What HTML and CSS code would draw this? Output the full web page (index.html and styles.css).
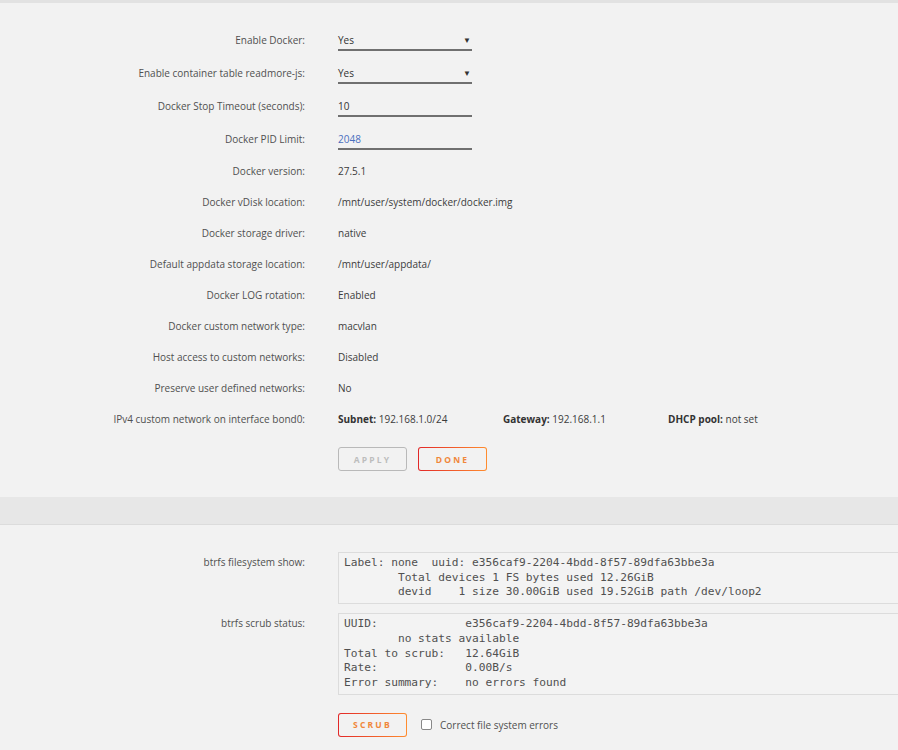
FILE: index.html
```html
<!DOCTYPE html>
<html lang="en">
<head>
    <meta charset="UTF-8">
    <title>Docker Settings</title>
    <link rel="stylesheet" href="styles.css">
</head>
<body>
    <div class="topbar"></div>

    <form class="settings">
        <div class="row input-row">
            <label>Enable Docker:</label>
            <div class="select"><span>Yes</span><span class="caret">&#9660;</span></div>
        </div>
        <div class="row input-row">
            <label>Enable container table readmore-js:</label>
            <div class="select"><span>Yes</span><span class="caret">&#9660;</span></div>
        </div>
        <div class="row input-row">
            <label>Docker Stop Timeout (seconds):</label>
            <div class="text-input">10</div>
        </div>
        <div class="row input-row">
            <label>Docker PID Limit:</label>
            <div class="text-input placeholder">2048</div>
        </div>
        <div class="row">
            <label>Docker version:</label>
            <span>27.5.1</span>
        </div>
        <div class="row">
            <label>Docker vDisk location:</label>
            <span>/mnt/user/system/docker/docker.img</span>
        </div>
        <div class="row">
            <label>Docker storage driver:</label>
            <span>native</span>
        </div>
        <div class="row">
            <label>Default appdata storage location:</label>
            <span>/mnt/user/appdata/</span>
        </div>
        <div class="row">
            <label>Docker LOG rotation:</label>
            <span>Enabled</span>
        </div>
        <div class="row">
            <label>Docker custom network type:</label>
            <span>macvlan</span>
        </div>
        <div class="row">
            <label>Host access to custom networks:</label>
            <span>Disabled</span>
        </div>
        <div class="row">
            <label>Preserve user defined networks:</label>
            <span>No</span>
        </div>
        <div class="row">
            <label>IPv4 custom network on interface bond0:</label>
            <div class="network">
                <span class="net-item"><b>Subnet:</b> 192.168.1.0/24</span>
                <span class="net-item"><b>Gateway:</b> 192.168.1.1</span>
                <span class="net-item"><b>DHCP pool:</b> not set</span>
            </div>
        </div>
        <div class="row button-row">
            <span></span>
            <div class="buttons">
                <button type="button" class="btn" disabled>Apply</button>
                <button type="button" class="btn btn-accent">Done</button>
            </div>
        </div>
    </form>

    <div class="band"></div>

    <div class="settings btrfs">
        <div class="row pre-row">
            <label>btrfs filesystem show:</label>
            <pre class="output">Label: none  uuid: e356caf9-2204-4bdd-8f57-89dfa63bbe3a
	Total devices 1 FS bytes used 12.26GiB
	devid    1 size 30.00GiB used 19.52GiB path /dev/loop2</pre>
        </div>
        <div class="row pre-row">
            <label>btrfs scrub status:</label>
            <pre class="output">UUID:             e356caf9-2204-4bdd-8f57-89dfa63bbe3a
	no stats available
Total to scrub:   12.64GiB
Rate:             0.00B/s
Error summary:    no errors found</pre>
        </div>
        <div class="row scrub-row">
            <span></span>
            <div class="scrub">
                <button type="button" class="btn btn-accent">Scrub</button>
                <label class="check"><span class="box"></span>Correct file system errors</label>
            </div>
        </div>
    </div>
</body>
</html>
```

FILE: styles.css
```css
html {
    overflow-x: hidden;
}
body {
    margin: 0;
    background-color: #f2f2f2;
    font-family: "Open Sans", Arial, sans-serif;
    font-size: 10px;
    color: #3c3c3c;
}
.topbar {
    height: 3px;
    background-color: #e2e2e2;
}
.settings {
    padding-top: 20px;
}
.row {
    display: grid;
    grid-template-columns: 305px 1fr;
    column-gap: 33px;
    align-items: center;
    height: 31px;
}
.row label {
    text-align: right;
    color: #505050;
}
.input-row {
    height: 33px;
}
.select, .text-input {
    width: 134px;
    height: 23px;
    box-sizing: border-box;
    border-bottom: 2px solid #707070;
    display: flex;
    justify-content: space-between;
    align-items: center;
    padding-top: 2px;
    color: #333;
}
.caret {
    font-size: 8px;
    margin-right: 1px;
}
.placeholder {
    color: #4a6fbf;
}
.network {
    display: flex;
}
.net-item {
    width: 165px;
}
.net-item b {
    color: #333;
}
.button-row {
    height: 37px;
    align-items: end;
}
.buttons, .scrub {
    display: flex;
    align-items: center;
    gap: 11px;
}
.btn {
    width: 69px;
    height: 24px;
    border-radius: 3px;
    font-family: "Open Sans", Arial, sans-serif;
    font-size: 8.5px;
    font-weight: bold;
    letter-spacing: 2.2px;
    text-transform: uppercase;
    cursor: pointer;
}
.btn[disabled] {
    border: 1px solid #b9b9b9;
    background-color: #f2f2f2;
    color: #bdbdbd;
}
.btn-accent {
    border: 1px solid transparent;
    background: linear-gradient(#f2f2f2, #f2f2f2) padding-box,
                linear-gradient(90deg, #e22828, #ff8d2f) border-box;
    color: #f0873a;
}
.band {
    margin-top: 26px;
    height: 27px;
    background-color: #e7e7e7;
    border-bottom: 1px solid #dcdcdc;
}
.btrfs {
    padding-top: 27px;
}
.pre-row {
    height: auto;
    align-items: start;
    margin-bottom: 9px;
}
.pre-row label {
    padding-top: 3px;
}
.output {
    margin: 0;
    width: 600px;
    box-sizing: border-box;
    padding: 3px 5px 3px;
    border: 1px solid #dcdcdc;
    background-color: #f3f3f3;
    font-family: "DejaVu Sans Mono", monospace;
    font-size: 11.2px;
    line-height: 14.7px;
    color: #505050;
    tab-size: 8;
}
.scrub-row {
    height: auto;
    padding-top: 9px;
}
.check {
    display: flex;
    align-items: center;
    gap: 8px;
    margin-left: 3px;
    color: #555;
}
.row .check {
    text-align: left;
}
.box {
    width: 9px;
    height: 9px;
    border: 1px solid #888;
    border-radius: 2px;
    background-color: #fff;
}
```
